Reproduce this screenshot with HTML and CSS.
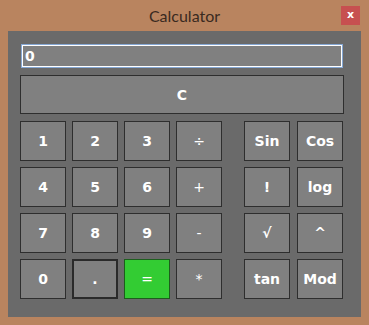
FILE: index.html
```html
<!DOCTYPE html>
<html>
<head>
<meta charset="utf-8">
<link rel="stylesheet" href="styles.css">
</head>
<body>
<div class="window">
  <div class="titlebar">
    <span class="title">Calculator</span>
    <span class="close">x</span>
  </div>
  <div class="panel">
    <div class="display">0</div>
    <div class="btn clear">C</div>
    <div class="keys">
      <div class="grid main">
        <div class="btn">1</div><div class="btn">2</div><div class="btn">3</div><div class="btn op">÷</div>
        <div class="btn">4</div><div class="btn">5</div><div class="btn">6</div><div class="btn op">+</div>
        <div class="btn">7</div><div class="btn">8</div><div class="btn">9</div><div class="btn op">-</div>
        <div class="btn">0</div><div class="btn focus">.</div><div class="btn eq">=</div><div class="btn op">*</div>
      </div>
      <div class="grid sci">
        <div class="btn">Sin</div><div class="btn">Cos</div>
        <div class="btn">!</div><div class="btn">log</div>
        <div class="btn">√</div><div class="btn">^</div>
        <div class="btn">tan</div><div class="btn">Mod</div>
      </div>
    </div>
  </div>
</div>
</body>
</html>
```
FILE: styles.css
```css
html, body {
  margin: 0;
  padding: 0;
}
body {
  width: 369px;
  height: 325px;
  background: #b9845f;
  overflow: hidden;
}
.window {
  width: 369px;
  height: 325px;
  box-sizing: border-box;
  background: #b9845f;
  display: flex;
  flex-direction: column;
}
.titlebar {
  height: 31px;
  position: relative;
  display: flex;
  align-items: center;
  justify-content: center;
}
.title {
  font-family: Lato, "Noto Sans", sans-serif;
  font-size: 16px;
  color: #3a2a1f;
  margin-top: 0px;
}
.close {
  position: absolute;
  right: 9px;
  top: 6px;
  width: 19px;
  height: 19px;
  background: #c75050;
  color: #fff;
  font-family: "DejaVu Sans", sans-serif;
  font-weight: bold;
  font-size: 11px;
  line-height: 17px;
  text-align: center;
}
.panel {
  margin-left: 8px;
  width: 353px;
  height: 286px;
  box-sizing: border-box;
  background: #6a6a6a;
  padding: 13px 17px 0 12px;
  display: flex;
  flex-direction: column;
}
.display {
  margin: 0 1px;
  height: 24px;
  box-sizing: border-box;
  border: 1px solid #86a8d4;
  box-shadow: inset 0 0 0 1px #ffffff;
  background: #808080;
  color: #fff;
  font-family: "DejaVu Sans", sans-serif;
  font-weight: bold;
  font-size: 14px;
  line-height: 22px;
  padding-left: 3px;
}
.btn {
  box-sizing: border-box;
  background: #808080;
  border: 1px solid #2e2e2e;
  color: #fff;
  font-family: "DejaVu Sans", sans-serif;
  font-weight: bold;
  font-size: 14px;
  display: flex;
  align-items: center;
  justify-content: center;
  height: 40px;
}
.clear {
  margin-top: 7px;
  height: 39px;
}
.keys {
  margin-top: 7px;
  display: flex;
  gap: 22px;
}
.grid {
  display: grid;
  grid-auto-rows: 40px;
  row-gap: 6px;
}
.main {
  grid-template-columns: repeat(4, 46px);
  column-gap: 6px;
}
.sci {
  grid-template-columns: repeat(2, 46px);
  column-gap: 7px;
}
.op {
  font-weight: normal;
}
.focus {
  border: 2px solid #2a2a2a;
}
.eq {
  background: #33cc33;
  border-color: #1d5e1d;
  font-weight: normal;
}
```
